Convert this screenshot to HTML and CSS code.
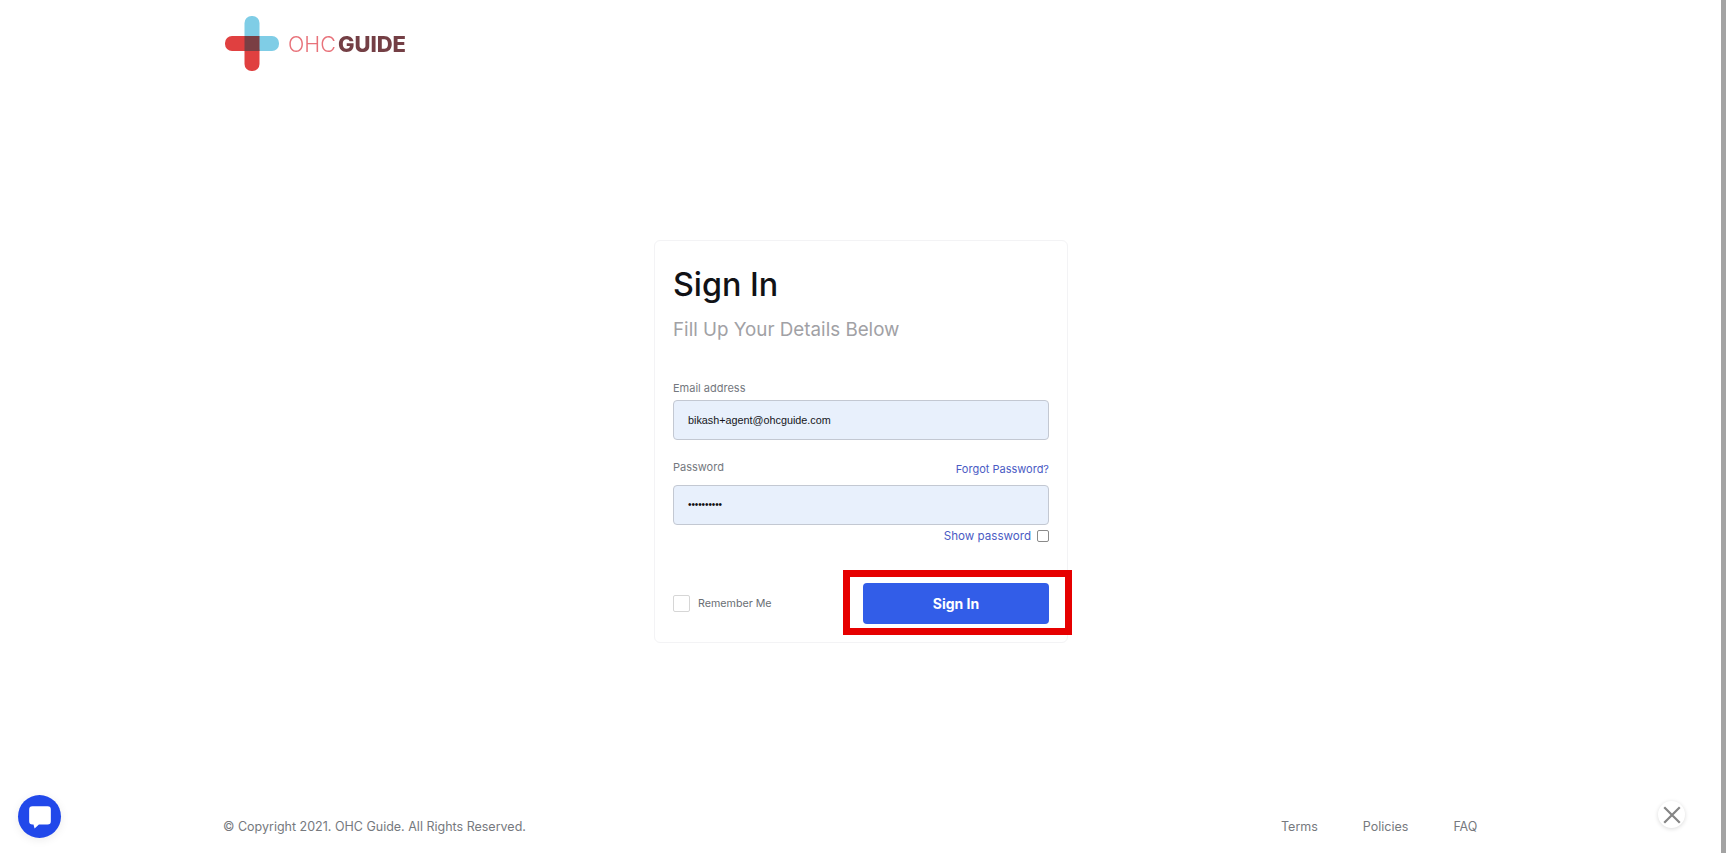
FILE: index.html
```html
<!DOCTYPE html>
<html>
<head lang="en">
    <meta charset="UTF-8">
    <title>Sign In</title>
    <link rel="stylesheet" href="styles.css">
</head>
<body>
    <div class="page">
        <header class="top">
            <div class="logo">
                <svg class="logo-mark" width="54" height="56" viewBox="0 0 54 56">
                    <rect x="19.5" y="0" width="15" height="28" rx="7" fill="#7fcde6"/>
                    <rect x="27" y="20" width="27" height="15" rx="7" fill="#7fcde6"/>
                    <rect x="0" y="20" width="27" height="15" rx="7" fill="#e04040"/>
                    <rect x="19.5" y="28" width="15" height="27" rx="7" fill="#e04040"/>
                    <rect x="19.5" y="20" width="15" height="15" fill="#7a3f44"/>
                </svg>
                <span class="logo-ohc">OHC</span><span class="logo-guide">GUIDE</span>
            </div>
        </header>
        <main class="middle">
            <form class="card">
                <h1>Sign In</h1>
                <p class="sub">Fill Up Your Details Below</p>
                <label class="lbl lbl-email">Email address</label>
                <div class="field">bikash+agent@ohcguide.com</div>
                <div class="pass-row">
                    <label class="lbl">Password</label>
                    <a class="link" href="#">Forgot Password?</a>
                </div>
                <div class="field field-dots">&#8226;&#8226;&#8226;&#8226;&#8226;&#8226;&#8226;&#8226;&#8226;&#8226;</div>
                <div class="show-row">
                    <a class="link link-show" href="#">Show password</a>
                    <span class="check-small"></span>
                </div>
                <div class="bottom-row">
                    <div class="remember">
                        <span class="check"></span>
                        <span>Remember Me</span>
                    </div>
                    <div class="highlight">
                        <button class="btn" type="button">Sign In</button>
                    </div>
                </div>
            </form>
        </main>
        <footer class="foot">
            <span>&copy; Copyright 2021. OHC Guide. All Rights Reserved.</span>
            <nav class="foot-links">
                <a href="#">Terms</a>
                <a href="#">Policies</a>
                <a href="#">FAQ</a>
            </nav>
        </footer>
    </div>

    <div class="chat">
        <svg width="26" height="26" viewBox="0 0 24 24">
            <path d="M5 2h14a3 3 0 0 1 3 3v11a3 3 0 0 1-3 3h-8l-4 3.500-1-3.500H5a3 3 0 0 1-3-3V5a3 3 0 0 1 3-3z" fill="#fff"/>
        </svg>
    </div>
    <div class="close">
        <svg width="20" height="20" viewBox="0 0 18 18">
            <path d="M2 2l14 14M16 2L2 16" stroke="#858585" stroke-width="2" fill="none"/>
        </svg>
    </div>
    <div class="scroll"></div>
</body>
</html>
```

FILE: styles.css
```css
* {
    margin: 0;
    padding: 0;
    box-sizing: border-box;
}
html, body {
    height: 100%;
    overflow: hidden;
}
body {
    background: #fff;
    font-family: Inter, "Liberation Sans", sans-serif;
    color: #6c757d;
}
a {
    text-decoration: none;
    color: inherit;
}
.page {
    height: 856px;
    display: flex;
    flex-direction: column;
}
.top {
    height: 240px;
    padding: 16px 0 0 225px;
}
.logo {
    display: flex;
    align-items: center;
    height: 56px;
    filter: blur(0.5px);
}
.logo-mark {
    margin-right: 9px;
}
.logo-ohc {
    font-size: 21.500px;
    font-weight: 300;
    color: #e8727a;
    margin-right: 2px;
}
.logo-guide {
    font-size: 22px;
    font-weight: 800;
    color: #743f45;
}
.middle {
    height: 403px;
    padding-left: 654px;
}
.card {
    width: 414px;
    height: 403px;
    border: 1px solid #f3f3f5;
    border-radius: 6px;
    padding: 24px 18px 0 18px;
}
.card h1 {
    font-size: 32.300px;
    line-height: 40px;
    font-weight: 550;
    color: #111216;
}
.sub {
    font-size: 18.800px;
    line-height: 24px;
    color: #a1a1a5;
    margin-top: 13px;
}
.lbl {
    display: block;
    font-size: 11px;
    line-height: 14px;
    color: #74787e;
}
.lbl-email {
    margin-top: 39px;
    margin-bottom: 5px;
}
.field {
    height: 40px;
    background: #e8f0fc;
    border: 1px solid #c3c8d2;
    border-radius: 4px;
    padding-left: 14px;
    font-family: "Liberation Sans", sans-serif;
    font-size: 10.800px;
    line-height: 38px;
    color: #15161a;
}
.field-dots {
    font-size: 10px;
    letter-spacing: -0.1px;
    color: #111;
}
.pass-row {
    display: flex;
    justify-content: space-between;
    padding-top: 1px;
    margin-top: 19px;
    height: 26px;
}
.link {
    font-size: 11px;
    line-height: 14px;
    color: #4a5bc4;
    padding-top: 2px;
}
.show-row {
    display: flex;
    justify-content: flex-end;
    align-items: center;
    gap: 6px;
    height: 22px;
}
.link-show {
    font-size: 11.600px;
    padding-top: 0;
}
.check-small {
    width: 12px;
    height: 12px;
    border: 1px solid #8a8a8a;
    border-radius: 2px;
}
.bottom-row {
    display: flex;
    justify-content: space-between;
    align-items: center;
    margin-top: 36px;
    position: relative;
}
.remember {
    display: flex;
    align-items: center;
    gap: 8px;
    font-size: 10.700px;
    color: #6a6e74;
}
.check {
    width: 17px;
    height: 17px;
    border: 1px solid #d6d6d6;
    border-radius: 2px;
}
.highlight {
    margin: -13px -23px -11px 0;
    padding: 6px 16px 4px 13px;
    width: 229px;
    height: 65px;
    border: 7px solid #e60000;
    background: #fff;
}
.btn {
    display: block;
    width: 186px;
    height: 41px;
    border: 0;
    border-radius: 4px;
    background: #325de8;
    color: #fff;
    font-family: Inter, sans-serif;
    font-size: 14px;
    font-weight: 700;
    padding-bottom: 1px;
}
.foot {
    flex: 1;
    display: flex;
    justify-content: space-between;
    align-items: flex-end;
    padding: 0 0 21px 223px;
    font-size: 12.500px;
    line-height: 16px;
    color: #76797e;
}
.foot-links {
    display: flex;
    gap: 45px;
    width: 445px;
}
.chat {
    position: absolute;
    left: 18px;
    top: 795px;
    width: 43px;
    height: 43px;
    border-radius: 50%;
    background: #2148ea;
    box-shadow: 0 2px 10px rgba(0,0,0,0.08);
    display: flex;
    align-items: center;
    justify-content: center;
}
.close {
    position: absolute;
    left: 1658px;
    top: 801px;
    width: 27px;
    height: 27px;
    border-radius: 50%;
    background: #fff;
    box-shadow: 0 1px 4px rgba(0,0,0,0.15);
    display: flex;
    align-items: center;
    justify-content: center;
}
.scroll {
    position: absolute;
    right: 0;
    top: 0;
    width: 5px;
    height: 853px;
    background: #a3a3a3;
}
```
